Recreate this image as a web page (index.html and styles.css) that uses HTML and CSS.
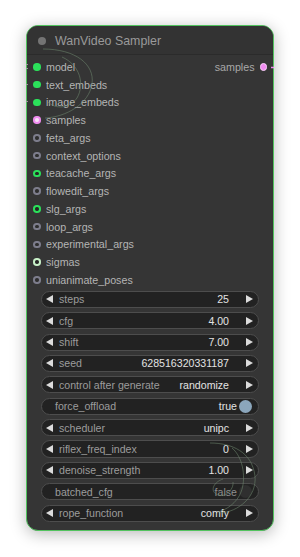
FILE: index.html
```html
<!DOCTYPE html>
<html>
<head>
<meta charset="utf-8">
<link rel="stylesheet" href="styles.css">
</head>
<body>
<div class="node">
  <div class="title"><span class="tdot"></span><span class="ttext">WanVideo Sampler</span></div>
  <div class="slots">
    <div class="row"><div class="in"><span class="dot fill-green"></span>model</div><div class="out">samples<span class="dot out-pink"></span></div></div>
    <div class="row"><div class="in"><span class="dot fill-green"></span>text_embeds</div></div>
    <div class="row"><div class="in"><span class="dot fill-green"></span>image_embeds</div></div>
    <div class="row"><div class="in"><span class="dot ring-pink"></span>samples</div></div>
    <div class="row"><div class="in"><span class="dot ring-gray"></span>feta_args</div></div>
    <div class="row"><div class="in"><span class="dot ring-gray"></span>context_options</div></div>
    <div class="row"><div class="in"><span class="dot ring-green"></span>teacache_args</div></div>
    <div class="row"><div class="in"><span class="dot ring-gray"></span>flowedit_args</div></div>
    <div class="row"><div class="in"><span class="dot ring-green"></span>slg_args</div></div>
    <div class="row"><div class="in"><span class="dot ring-gray"></span>loop_args</div></div>
    <div class="row"><div class="in"><span class="dot ring-gray"></span>experimental_args</div></div>
    <div class="row"><div class="in"><span class="dot ring-pale"></span>sigmas</div></div>
    <div class="row"><div class="in"><span class="dot ring-gray"></span>unianimate_poses</div></div>
  </div>
  <div class="widgets">
    <div class="w"><span class="arr-l"></span><span class="lbl">steps</span><span class="val">25</span><span class="arr-r"></span></div>
    <div class="w"><span class="arr-l"></span><span class="lbl">cfg</span><span class="val">4.00</span><span class="arr-r"></span></div>
    <div class="w"><span class="arr-l"></span><span class="lbl">shift</span><span class="val">7.00</span><span class="arr-r"></span></div>
    <div class="w"><span class="arr-l"></span><span class="lbl">seed</span><span class="val">628516320331187</span><span class="arr-r"></span></div>
    <div class="w"><span class="arr-l"></span><span class="lbl">control after generate</span><span class="val">randomize</span><span class="arr-r"></span></div>
    <div class="w toggle"><span class="lbl">force_offload</span><span class="val">true</span><span class="knob on"></span></div>
    <div class="w"><span class="arr-l"></span><span class="lbl">scheduler</span><span class="val">unipc</span><span class="arr-r"></span></div>
    <div class="w"><span class="arr-l"></span><span class="lbl">riflex_freq_index</span><span class="val">0</span><span class="arr-r"></span></div>
    <div class="w"><span class="arr-l"></span><span class="lbl">denoise_strength</span><span class="val">1.00</span><span class="arr-r"></span></div>
    <div class="w toggle"><span class="lbl">batched_cfg</span><span class="val off">false</span><span class="knob"></span></div>
    <div class="w"><span class="arr-l"></span><span class="lbl">rope_function</span><span class="val">comfy</span><span class="arr-r"></span></div>
  </div>
</div>
<svg class="links" width="300" height="557" viewBox="0 0 300 557">
  <path d="M43,49 C75,49 95,64 92,84 C89,104 66,117 45,118" />
  <path d="M62,57 C80,65 85,84 77,98 C70,108 56,110 48,102" />
  <path d="M210,443 C232,443 252,452 255,476 C257,497 238,512 220,513" />
  <path d="M232,448 C244,458 246,480 241,492 C237,503 226,510 218,512" />
  <path d="M223,479 C214,482 210,490 216,494 C224,499 234,490 233,482" />
  <line class="stub" x1="26" y1="64.5" x2="28" y2="64.5" />
  <line class="stub" x1="26" y1="68.5" x2="28" y2="68.5" />
  <line class="stub" x1="26" y1="84.5" x2="28" y2="84.5" />
  <line class="stub" x1="26" y1="101.5" x2="28" y2="101.5" />
  <line class="stub pink" x1="271" y1="67.5" x2="274" y2="67.5" />
</svg>
</body>
</html>
```
FILE: styles.css
```css
html, body {
  margin: 0;
  padding: 0;
  background: #ffffff;
}
body {
  width: 300px;
  height: 557px;
  position: relative;
  overflow: hidden;
  font-family: "Liberation Sans", Arial, sans-serif;
}
.node {
  margin: 25px 0 0 26px;
  width: 248px;
  height: 506px;
  box-sizing: border-box;
  border: 1px solid #52c35e;
  border-radius: 12px;
  background: #353535;
  box-shadow: 0 3px 16px rgba(0, 0, 0, 0.28);
  display: flex;
  flex-direction: column;
  overflow: hidden;
}
.title {
  height: 28px;
  display: flex;
  align-items: center;
  border-bottom: 1px solid #2b2b2b;
  background: #333333;
  flex-shrink: 0;
}
.tdot {
  width: 8px;
  height: 8px;
  border-radius: 50%;
  background: #747474;
  margin-left: 11px;
  margin-top: 1px;
}
.ttext {
  margin-left: 9px;
  font-size: 12.4px;
  color: #9a9a9a;
  margin-top: 1px;
}
.slots {
  padding-top: 3px;
  display: flex;
  flex-direction: column;
}
.row {
  height: 17.75px;
  display: flex;
  align-items: center;
  justify-content: space-between;
  font-size: 10.7px;
  color: #b4b4b4;
}
.in {
  display: flex;
  align-items: center;
  padding-left: 6px;
}
.out {
  display: flex;
  align-items: center;
  padding-right: 6px;
  color: #a8a8a8;
}
.dot {
  width: 7.5px;
  height: 7.5px;
  border-radius: 50%;
  box-sizing: border-box;
  flex-shrink: 0;
}
.in .dot { margin-right: 5.5px; }
.out .dot { margin-left: 5px; }
.fill-green { background: #2be05a; }
.ring-green { border: 2px solid #2be05a; background: #262626; }
.ring-gray { border: 2px solid #7d7d8c; background: #2e2e2e; }
.ring-pale { border: 2px solid #c8f0c8; background: #262626; }
.ring-pink { border: 2px solid #f08cf0; background: #f8e0f8; }
.out-pink { background: #f08cf0; border: 1px solid #fbd0fb; }
.widgets {
  padding: 2px 14px 0 14px;
  display: flex;
  flex-direction: column;
  gap: 4.2px;
}
.w {
  height: 17.2px;
  box-sizing: border-box;
  border: 1px solid #4d4d4d;
  border-radius: 9px;
  background: #222222;
  display: flex;
  align-items: center;
  font-size: 10.6px;
  padding: 0 5px 0 4px;
}
.arr-l {
  width: 0;
  height: 0;
  border-top: 4.5px solid transparent;
  border-bottom: 4.5px solid transparent;
  border-right: 7.5px solid #dcdcdc;
  flex-shrink: 0;
}
.arr-r {
  width: 0;
  height: 0;
  border-top: 4.5px solid transparent;
  border-bottom: 4.5px solid transparent;
  border-left: 7.5px solid #dcdcdc;
  flex-shrink: 0;
  margin-left: 17px;
}
.lbl {
  color: #9c9c9c;
  margin-left: 6px;
  flex: 1;
  white-space: nowrap;
}
.val {
  color: #e2e2e2;
  white-space: nowrap;
}
.toggle { padding: 0 6px 0 13px; }
.toggle .lbl { margin-left: 0; }
.val.off { color: #8e8e8e; }
.knob {
  width: 13px;
  height: 13px;
  border-radius: 50%;
  background: #2f2f2f;
  margin-left: 2px;
  flex-shrink: 0;
}
.knob.on { background: #8ba6bc; }
.links {
  position: absolute;
  left: 0;
  top: 0;
  pointer-events: none;
}
.links path {
  fill: none;
  stroke: #6f8a6f;
  stroke-width: 0.9;
  opacity: 0.6;
}
.links .stub {
  stroke: #9a9a9a;
  stroke-width: 1;
}
.links .stub.pink {
  stroke: #f08cf0;
  stroke-width: 1.5;
}
```
